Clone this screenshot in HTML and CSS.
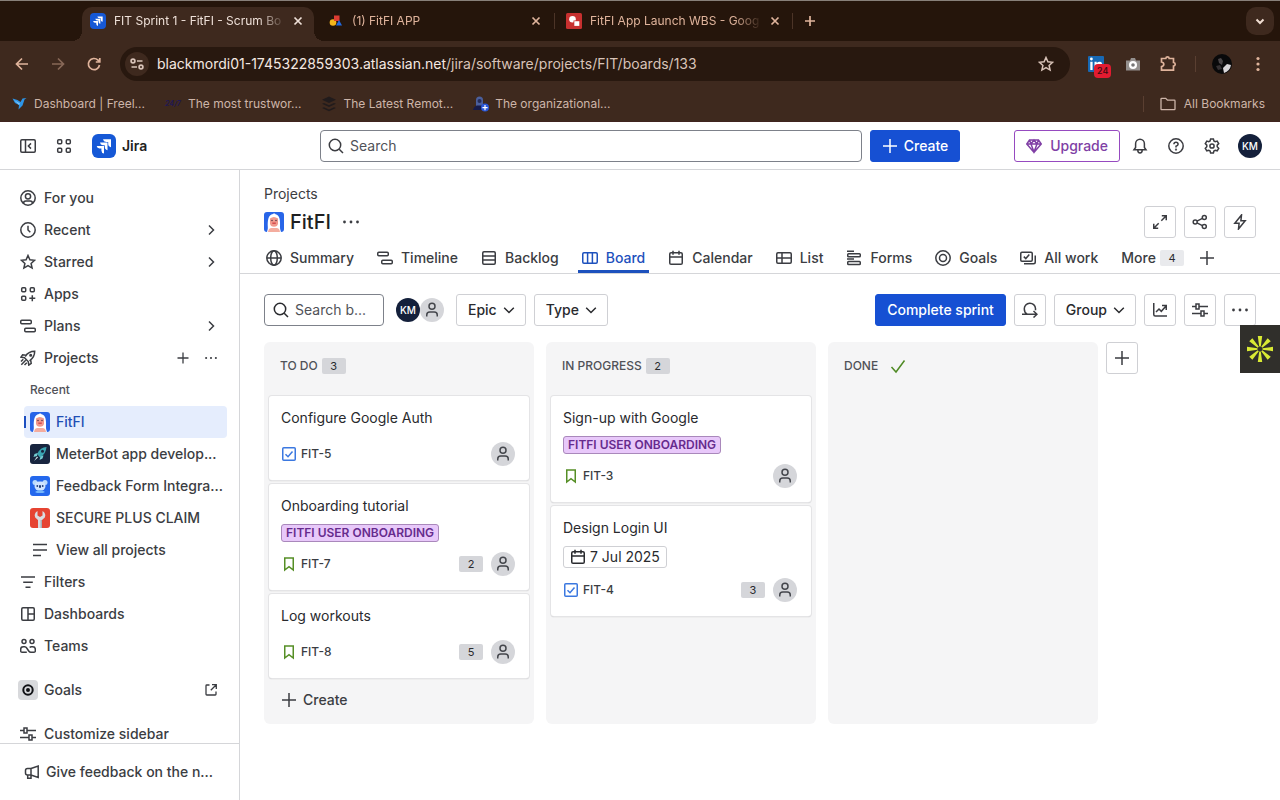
FILE: index.html
```html
<!DOCTYPE html>
<html lang="en">
<head>
<meta charset="utf-8">
<meta name="viewport" content="width=device-width, initial-scale=1">
<title>FIT Sprint 1 - FitFI - Scrum Board</title>
<link rel="stylesheet" href="styles.css">
</head>
<body>
<svg class="defs" aria-hidden="true">
  <symbol id="close" viewBox="0 0 16 16"><path d="M4.500 4.500l7 7M11.500 4.500l-7 7"/></symbol>
  <symbol id="plus" viewBox="0 0 16 16"><path d="M8 1v14M1 8h14"/></symbol>
  <symbol id="more" viewBox="0 0 16 16"><g fill="currentColor" stroke="none"><circle cx="1.500" cy="8" r="1.400"/><circle cx="8" cy="8" r="1.400"/><circle cx="14.500" cy="8" r="1.400"/></g></symbol>
  <symbol id="chev-right" viewBox="0 0 16 16"><path d="M6 3.500L10.500 8 6 12.500"/></symbol>
  <symbol id="chev-down" viewBox="0 0 16 16"><path d="M3.200 5.800L8 10.500l4.800-4.700"/></symbol>
  <symbol id="search" viewBox="0 0 16 16"><circle cx="7" cy="7" r="5.700"/><path d="M11.200 11.200L15 15"/></symbol>
  <symbol id="star" viewBox="0 0 16 16"><path d="M8 1.500l1.900 4.300 4.700.5-3.500 3.100 1 4.700L8 11.700l-4.100 2.400 1-4.700L1.400 6.300l4.700-.5z"/></symbol>
  <symbol id="sliders" viewBox="0 0 16 16"><path d="M0 4.500h4M7 4.500h9M4 2h3v5H4zM0 11.500h9M12 11.500h4M9 9h3v5H9z"/></symbol>
  <symbol id="timeline" viewBox="0 0 16 16"><rect x=".75" y="2.250" width="10.500" height="3.500" rx="1"/><rect x="4.750" y="10.250" width="10.500" height="3.500" rx="1"/></symbol>
  <symbol id="person" viewBox="0 0 16 16"><circle cx="8" cy="4.200" r="3"/><path d="M2.750 14.500v-1.500q0-3 3-3h4.500q3 0 3 3v1.500"/></symbol>
  <symbol id="calendar" viewBox="0 0 16 16"><rect x="1.750" y="2.750" width="12.500" height="11.500" rx="1.300"/><path d="M2 7h12M5 .8v4M11 .8v4"/></symbol>
  <symbol id="task" viewBox="0 0 16 16"><rect x="1.750" y="1.750" width="12.500" height="12.500" rx="1"/><path d="M4.500 8.200l2.500 2.500 4.500-5.200"/></symbol>
  <symbol id="story" viewBox="0 0 16 16"><path d="M3.750 2h8.500v12L8 10.600 3.750 14z"/></symbol>
  <symbol id="target" viewBox="0 0 16 16"><circle cx="8" cy="8" r="7.200"/><circle cx="8" cy="8" r="3.500"/></symbol>
  <symbol id="jira" viewBox="0 0 24 24"><rect width="24" height="24" rx="6" fill="#1558d6" stroke="none"/><g fill="#fff" stroke="none"><path d="M11 5.200h8v8q-2.800-.6-2.800-3.200V8h-2Q11.400 7.800 11 5.200z"/><path d="M8 8.500h7.500v7.700q-2.700-.5-2.700-3.100v-1.900h-2Q8.300 11 8 8.500z"/><path d="M4.700 12h7.300v7.500q-2.600-.5-2.600-3v-1.900H7.500Q5 14.400 4.700 12z"/></g></symbol>
  <symbol id="fitfi" viewBox="0 0 20 20"><rect width="20" height="20" rx="3" fill="#2865e8" stroke="none"/><g stroke="none"><path d="M3 20c.3-2 1-2.500.8-5C3.500 9 4 2.500 9 2c1-1 2.500-.3 2.500.3C16 3 16.300 9 16 15c-.1 2.500.7 3 1 5z" fill="#fff"/><path d="M6 6.500q3.800-3 8 0v5q-.5 3.200-4 3.200T6 11.500z" fill="#f1998c"/><path d="M4 20q.5-4 3.500-4h5q3 0 3.500 4z" fill="#f4ad9f"/><circle cx="8" cy="8.500" r=".8" fill="#5b3948"/><circle cx="12" cy="8.500" r=".8" fill="#5b3948"/><path d="M8.300 10.500h3.500v1.400H8.300z" fill="#d3464a"/></g></symbol>
</svg>

<header class="browser">
  <div class="tabstrip">
    <div class="tab active"><svg class="i"><use href="#jira"/></svg><span class="tab-title">FIT Sprint 1 - FitFI - Scrum Bo</span><button class="bare" aria-label="Close tab"><svg class="i s15"><use href="#close"/></svg></button></div>
    <div class="tab"><svg class="i" viewBox="0 0 16 16"><g stroke="none"><circle cx="5" cy="9.500" r="3.300" fill="#f5b51b"/><path d="M6 2.500h5.500V8H6z" fill="#dd3c32"/><path d="M11 7l3 5.500H8z" fill="#2169e0"/></g></svg><span class="tab-title">(1) FitFI APP</span><button class="bare" aria-label="Close tab"><svg class="i s15"><use href="#close"/></svg></button></div>
    <div class="tab split"><svg class="i" viewBox="0 0 16 16"><g stroke="none"><rect width="16" height="16" rx="1.500" fill="#c7302f"/><circle cx="6.500" cy="6.300" r="3.300" fill="#fff"/><path d="M7.500 7.500h6v5.500h-6z" fill="#c7302f"/><path d="M8.300 8.200h5v4.700h-5z" fill="#fff"/></g></svg><span class="tab-title">FitFI App Launch WBS - Goog</span><button class="bare" aria-label="Close tab"><svg class="i s15"><use href="#close"/></svg></button></div>
    <button class="bare new-tab split" aria-label="New tab"><svg class="i s15" viewBox="0 0 16 16"><path d="M8 3v10M3 8h10"/></svg></button>
    <button class="tab-menu" aria-label="Search tabs"><svg class="i s2" viewBox="0 0 16 16"><path d="M4.500 6.500L8 10l3.500-3.500"/></svg></button>
  </div>
  <div class="toolbar">
    <nav class="nav-buttons" aria-label="History">
      <button class="bare" aria-label="Back"><svg class="i s15" viewBox="0 0 16 16"><path d="M14 8H2.500M8 2.500L2.500 8 8 13.500"/></svg></button>
      <button class="bare dim" aria-label="Forward"><svg class="i s15" viewBox="0 0 16 16"><path d="M2 8h11.500M8 2.500L13.500 8 8 13.500"/></svg></button>
      <button class="bare" aria-label="Reload"><svg class="i s15" viewBox="0 0 16 16"><path d="M13.500 9A5.600 5.600 0 1 1 12 4.200l1.500 1.500M13.800 2v4h-4"/></svg></button>
    </nav>
    <div class="omnibox">
      <button class="site-info" aria-label="Site information"><svg class="i s15" viewBox="0 0 16 16"><circle cx="4" cy="5" r="1.900"/><path d="M8 5h5.500M2.500 11H8"/><circle cx="12" cy="11" r="1.900"/></svg></button>
      <span class="url"><b>blackmordi01-1745322859303.atlassian.net</b>/jira/software/projects/FIT/boards/133</span>
      <button class="bare" aria-label="Bookmark this page"><svg class="i"><use href="#star"/></svg></button>
    </div>
    <div class="extensions">
      <span class="linkedin"><svg class="i" viewBox="0 0 16 16"><g stroke="none"><rect width="16" height="16" rx="1" fill="#1769b5"/><g fill="#fff"><circle cx="3.400" cy="3" r="1.400"/><path d="M2.300 5.800h2.300V14H2.300zM6.500 5.800h2.200V7q2-2 4.500-1l1 2V9h-5.500v5H6.500z"/></g></g></svg><span class="ext-count">24</span></span>
      <svg class="i" viewBox="0 0 16 16"><g stroke="none"><path d="M1 4.500h4L6 2h4l1 2.500h4V14.500H1z" fill="#94908e"/><circle cx="8" cy="9" r="4" fill="#fff"/><circle cx="8" cy="9" r="1.800" fill="#777"/></g></svg>
      <svg class="i big s15" viewBox="0 0 18 18"><path d="M2.500 3.500h4.300q.2-1.700 1.700-1.700t1.700 1.700h4.300v4q1.700.2 1.700 1.800t-1.700 1.800v4h-12v-3.500q2.300-.4 2.300-2.300T2.500 7z"/></svg>
      <span class="divider"></span>
      <svg class="i photo" viewBox="0 0 20 20"><g stroke="none"><circle cx="10" cy="10" r="10" fill="#09090a"/><path d="M11 14l4-4 4 1q-1 6-7 8z" fill="#d8d5d8"/><path d="M6 5l3-1 2 3-1 4-3-2z" fill="#4a4547"/><path d="M4 12l4-1 2 4-4 1z" fill="#353133"/></g></svg>
      <button class="bare" aria-label="Browser menu"><svg class="i" viewBox="0 0 16 16"><g fill="currentColor" stroke="none"><circle cx="8" cy="2.500" r="1.600"/><circle cx="8" cy="8" r="1.600"/><circle cx="8" cy="13.500" r="1.600"/></g></svg></button>
    </div>
  </div>
  <nav class="bookmarks" aria-label="Bookmarks">
    <a href="#"><svg class="i" viewBox="0 0 16 16"><g stroke="none"><path d="M.5 2.500l5 1.500 3 2 2-3.500 4-.5-2 1.500-2 6-4 4 .5-4.500L3 7z" fill="#2d95e8"/><path d="M2 4l6 3.500L7 9z" fill="#7dc6fa"/></g></svg>Dashboard | Freel...</a>
    <a href="#"><span class="fav-text">24/7</span>The most trustwor...</a>
    <a href="#"><svg class="i" viewBox="0 0 16 16"><g fill="#211b1c" stroke="none"><path d="M8 .5l7 3.200-7 3.200-7-3.200z"/><path d="M1 7.800L3 7l5 2.300L13 7l2 .8L8 11z"/><path d="M1 12l2-.8 5 2.300 5-2.300 2 .8-7 3.200z"/></g></svg>The Latest Remot...</a>
    <a href="#"><svg class="i" viewBox="0 0 16 16"><g stroke="none"><path d="M3 4q0-3.500 3.500-3.500T10 4v6H3z" fill="#4b5f9c"/><path d="M0 14q1-4 4-4.500h5l2 4.500z" fill="#171b48"/><circle cx="6.500" cy="5" r="2" fill="#252c58"/><circle cx="12" cy="11.500" r="4" fill="#2856d7"/><path d="M11.400 9h1.200v2h2v1.200h-2v2h-1.200v-2h-2V11h2z" fill="#fff"/></g></svg>The organizational...</a>
    <a class="all-bookmarks" href="#"><svg class="i s13" viewBox="0 0 16 16"><path d="M1 3q0-.7.700-.7h4L7.500 4.200h6.800q.7 0 .7.700v8q0 .7-.7.700H1.700q-.7 0-.7-.7z"/></svg>All Bookmarks</a>
  </nav>
</header>

<header class="topbar">
  <div class="brand">
    <button class="bare" aria-label="Collapse sidebar"><svg class="i" viewBox="0 0 16 16"><rect x=".75" y="1.750" width="14.500" height="12.500" rx="1.200"/><path d="M5.500 2v12M11 5.400L8.400 8l2.600 2.600"/></svg></button>
    <button class="bare" aria-label="Switch apps"><svg class="i" viewBox="0 0 16 16"><rect x="1.700" y="1.700" width="4" height="4" rx="1"/><rect x="10.300" y="1.700" width="4" height="4" rx="1"/><rect x="1.700" y="10.300" width="4" height="4" rx="1"/><rect x="10.300" y="10.300" width="4" height="4" rx="1"/></svg></button>
    <a class="logo" href="#"><svg class="i logo-mark"><use href="#jira"/></svg>Jira</a>
  </div>
  <div class="top-center">
    <label class="field global-search"><svg class="i"><use href="#search"/></svg><input type="search" placeholder="Search" aria-label="Search"></label>
    <button class="btn primary create"><svg class="i"><use href="#plus"/></svg>Create</button>
  </div>
  <div class="top-actions">
    <button class="btn upgrade"><svg class="i" viewBox="0 0 16 16"><path d="M3.500 2h9L15.300 6 8 14.300.7 6zM.7 6h14.600M5 6l3 8 3-8M3.500 2L5 6l3-4 3 4 1.500-4"/></svg>Upgrade</button>
    <button class="bare" aria-label="Notifications"><svg class="i" viewBox="0 0 16 16"><path d="M2 11.800l1.600-2.300V5.700a4.400 4.400 0 0 1 8.800 0v3.800l1.600 2.300zM5.800 12q0 3 2.200 3t2.200-3"/></svg></button>
    <button class="bare" aria-label="Help"><svg class="i" viewBox="0 0 16 16"><circle cx="8" cy="8" r="7.200"/><path d="M5.900 6.300Q6 4.300 8 4.300t2.100 1.900Q10.100 7.300 8 8.300v1.200"/><circle cx="8" cy="11.600" r=".4"/></svg></button>
    <button class="bare" aria-label="Settings"><svg class="i" viewBox="0 0 16 16"><path d="M6.600.9h2.800l.5 2 1.300.8 2-.6 1.500 2.500-1.500 1.500v1.700l1.500 1.500-1.500 2.500-2-.6-1.300.8-.5 2H6.600l-.5-2-1.300-.8-2 .6-1.500-2.500 1.500-1.500V7.100L1.300 5.600l1.500-2.500 2 .6 1.300-.8z"/><circle cx="8" cy="8" r="2.100"/></svg></button>
    <button class="avatar km" aria-label="Account">KM</button>
  </div>
</header>

<div class="shell">
  <aside class="sidebar">
    <nav class="side-list" aria-label="Sidebar">
      <a class="side-item" href="#"><svg class="i" viewBox="0 0 16 16"><circle cx="8" cy="8" r="7.200"/><circle cx="8" cy="6.300" r="2.600"/><path d="M3.500 13.500q0-2.500 2.300-2.500h4.400q2.300 0 2.300 2.500"/></svg>For you</a>
      <a class="side-item" href="#"><svg class="i" viewBox="0 0 16 16"><circle cx="8" cy="8" r="7.200"/><path d="M8 3.800V8l2.300 2.300"/></svg>Recent<svg class="i end"><use href="#chev-right"/></svg></a>
      <a class="side-item" href="#"><svg class="i"><use href="#star"/></svg>Starred<svg class="i end"><use href="#chev-right"/></svg></a>
      <a class="side-item" href="#"><svg class="i" viewBox="0 0 16 16"><rect x="1.700" y="1.700" width="4" height="4" rx="1"/><rect x="10.300" y="1.700" width="4" height="4" rx="1"/><rect x="1.700" y="10.300" width="4" height="4" rx="1"/><path d="M12.300 9.300v6M9.300 12.300h6"/></svg>Apps</a>
      <a class="side-item" href="#"><svg class="i"><use href="#timeline"/></svg>Plans<svg class="i end"><use href="#chev-right"/></svg></a>
      <div class="side-item"><svg class="i" viewBox="0 0 16 16"><path d="M5.200 6.500Q8.500 1.300 14.700 1.300 14.700 7.500 9.500 10.800M6 5.300L2.600 4.800.9 7.200l3.600.6 3.700 3.700.6 3.600 2.400-1.700-.5-3.400M1 11.500L3.300 9.200M1.300 14.700L5.700 10.300M4.500 15l2.300-2.300"/><circle cx="10.700" cy="5.300" r=".8"/></svg><span>Projects</span><span class="end pair"><button class="bare" aria-label="Add project"><svg class="i s13" viewBox="0 0 16 16"><path d="M8 2.500v11M2.500 8h11"/></svg></button><button class="bare" aria-label="Project options"><svg class="i small-dots"><use href="#more"/></svg></button></span></div>
      <div class="side-sub">
        <p class="side-label">Recent</p>
        <a class="side-item selected" href="#"><svg class="i pic"><use href="#fitfi"/></svg>FitFI</a>
        <a class="side-item" href="#"><svg class="i pic" viewBox="0 0 20 20"><g stroke="none"><rect width="20" height="20" rx="3" fill="#18253f"/><path d="M16.500 3q-6 0-9.500 7l3 3.500Q16 10 16.500 3z" fill="#3aa5b2"/><path d="M7.500 9L4.500 10l-1 3 3.500-1zM10.500 12.500l-1 3.500 3-1.500 1-3z" fill="#74cdd3"/><circle cx="12.500" cy="7.300" r="1.500" fill="#18253f"/><path d="M7 12.500l1 1L4 17z" fill="#d7eff1"/></g></svg>MeterBot app develop...</a>
        <a class="side-item" href="#"><svg class="i pic" viewBox="0 0 20 20"><g stroke="none"><rect width="20" height="20" rx="3" fill="#2468ed"/><circle cx="5" cy="6.500" r="2.500" fill="#b9dbfd"/><circle cx="15" cy="6.500" r="2.500" fill="#b9dbfd"/><rect x="4.500" y="5.500" width="11" height="9" rx="4.500" fill="#cfe4ff"/><path d="M5 16q5-4 10 0l-2 1H7z" fill="#75b6fb"/><circle cx="7.300" cy="10" r=".9" fill="#203d77"/><circle cx="12.700" cy="10" r=".9" fill="#203d77"/><rect x="9" y="9" width="2" height="3" rx="1" fill="#203d77"/></g></svg>Feedback Form Integra...</a>
        <a class="side-item" href="#"><svg class="i pic" viewBox="0 0 20 20"><g stroke="none"><rect width="20" height="20" rx="3" fill="#e64432"/><path d="M7.500 3v4.500L10 9l2.500-1.500V3q4 2.500 2.300 6.500L12 12v8H8v-8L5.200 9.500Q3.500 5.500 7.500 3z" fill="#d9dce0"/><path d="M10.500 12H12v8h-1.500z" fill="#a8adb4"/></g></svg>SECURE PLUS CLAIM</a>
        <a class="side-item" href="#"><svg class="i pic" viewBox="0 0 20 20"><path d="M3 4.500h14M3 10h14M3 15.500h8"/></svg>View all projects</a>
      </div>
      <a class="side-item" href="#"><svg class="i" viewBox="0 0 16 16"><path d="M1 3h14M3.200 8.200h9.600M5.500 13.300h5"/></svg>Filters</a>
      <a class="side-item" href="#"><svg class="i" viewBox="0 0 16 16"><rect x="1.750" y="1.750" width="12.500" height="12.500" rx="1.200"/><path d="M8 2v12M8 8h6"/></svg>Dashboards</a>
      <a class="side-item" href="#"><svg class="i" viewBox="0 0 16 16"><circle cx="4" cy="3.600" r="2"/><circle cx="12" cy="3.600" r="2"/><path d="M6.800 14.300H2q-1.300 0-1.300-1.300V11.300q0-2.500 2.500-2.500h1.500q1.300 0 2 1.200l2 3Q9.600 14.300 11 14.300h3q1.300 0 1.300-1.300v-1.700q0-2.500-2.500-2.500h-1.500q-1 0-1.600.7"/></svg>Teams</a>
      <a class="side-item apart" href="#"><span class="goal-tile"><svg class="i s2" viewBox="0 0 16 16"><circle cx="8" cy="8" r="4.700"/><circle cx="8" cy="8" r="1" fill="currentColor"/></svg></span>Goals<svg class="i end s13" viewBox="0 0 16 16"><path d="M6.500 3H3.800Q3 3 3 3.800v8.400q0 .8.800.8h8.400q.8 0 .8-.8V9.500M9 2.700h4.300V7M13 3L7.800 8.200"/></svg></a>
      <a class="side-item apart" href="#"><svg class="i"><use href="#sliders"/></svg>Customize sidebar</a>
    </nav>
    <a class="feedback" href="#"><svg class="i" viewBox="0 0 16 16"><path d="M7 4.500L14.200 2v11.500L7 11H3.500q-2 0-2-2V6.500q0-2 2-2zM7 4.500V11M3.700 11v3.200H7V11"/></svg>Give feedback on the n...</a>
  </aside>

  <main class="main">
    <div class="page-head">
      <div>
        <a class="crumb" href="#">Projects</a>
        <div class="title-row"><svg class="i pic"><use href="#fitfi"/></svg><h1>FitFI</h1><button class="bare" aria-label="Project actions"><svg class="i"><use href="#more"/></svg></button></div>
      </div>
      <div class="head-actions">
        <button class="btn icon" aria-label="Full screen"><svg class="i" viewBox="0 0 16 16"><path d="M9.800 1.750h4.450V6.200M14 2L9.300 6.700M6.200 14.250H1.750V9.800M2 14l4.700-4.700"/></svg></button>
        <button class="btn icon" aria-label="Share"><svg class="i" viewBox="0 0 16 16"><circle cx="3.200" cy="8" r="2"/><circle cx="12.300" cy="3.500" r="2"/><circle cx="12.300" cy="12.500" r="2"/><path d="M5 7.100l5.400-2.700M5 8.900l5.400 2.700"/></svg></button>
        <button class="btn icon" aria-label="Automation"><svg class="i" viewBox="0 0 16 16"><path d="M9.500 1L2.800 9.300h4.300L6.500 15l6.700-8.300H8.900z"/></svg></button>
      </div>
    </div>
    <nav class="views" aria-label="Project views">
      <a href="#"><svg class="i" viewBox="0 0 16 16"><circle cx="8" cy="8" r="7.200"/><ellipse cx="8" cy="8" rx="3.300" ry="7.200"/><path d="M1 8h14"/></svg>Summary</a>
      <a href="#"><svg class="i"><use href="#timeline"/></svg>Timeline</a>
      <a href="#"><svg class="i" viewBox="0 0 16 16"><rect x="1.750" y="1.750" width="12.500" height="12.500" rx="1.200"/><path d="M2 6h12M2 10h12"/></svg>Backlog</a>
      <a class="current" href="#"><svg class="i" viewBox="0 0 16 16"><rect x=".75" y="2.750" width="14.500" height="10.500" rx="1.200"/><path d="M5.600 3v10M10.400 3v10"/></svg>Board</a>
      <a href="#"><svg class="i"><use href="#calendar"/></svg>Calendar</a>
      <a href="#"><svg class="i" viewBox="0 0 16 16"><rect x=".75" y="2.750" width="14.500" height="10.500" rx="1.200"/><path d="M1 8h14M6 3v10"/></svg>List</a>
      <a href="#"><svg class="i" viewBox="0 0 16 16"><path d="M1 1.300h7M1 9h7"/><rect x="1.750" y="3.800" width="12.500" height="3" rx=".8"/><rect x="1.750" y="11.500" width="12.500" height="3" rx=".8"/></svg>Forms</a>
      <a href="#"><svg class="i"><use href="#target"/></svg>Goals</a>
      <a href="#"><svg class="i" viewBox="0 0 16 16"><rect x=".75" y="2.250" width="11.500" height="9" rx="1.200"/><path d="M3.800 6.600l2 2 3.500-4M4 13.750h9.500q1.750 0 1.750-1.750V5.500"/></svg>All work</a>
      <button class="bare views-more">More<span class="count light">4</span></button>
      <button class="bare" aria-label="Add view"><svg class="i"><use href="#plus"/></svg></button>
    </nav>

    <section class="content">
      <div class="filters">
        <label class="field board-search"><svg class="i"><use href="#search"/></svg><input type="search" placeholder="Search b..." aria-label="Search board"></label>
        <div class="people"><button class="avatar km" aria-label="KM">KM</button><button class="avatar" aria-label="Unassigned"><svg class="i"><use href="#person"/></svg></button></div>
        <button class="btn menu">Epic<svg class="i"><use href="#chev-down"/></svg></button>
        <button class="btn menu">Type<svg class="i"><use href="#chev-down"/></svg></button>
        <div class="board-actions">
          <button class="btn primary">Complete sprint</button>
          <button class="btn icon" aria-label="Sprint details"><svg class="i" viewBox="0 0 16 16"><path d="M0 12.250h15M11.500 9l3.500 3.250-3.500 3.250M5 12Q2.300 10.500 2.300 7A5.600 5.600 0 0 1 13.500 6.500V8.300"/></svg></button>
          <button class="btn menu">Group<svg class="i"><use href="#chev-down"/></svg></button>
          <button class="btn icon" aria-label="Insights"><svg class="i" viewBox="0 0 16 16"><path d="M1.750 1v11.500q0 1.500 1.500 1.500H15M4 10l3-3 2.300 2.300L14 4M10 3.500h4.250V8"/></svg></button>
          <button class="btn icon" aria-label="View settings"><svg class="i"><use href="#sliders"/></svg></button>
          <button class="btn icon" aria-label="More actions"><svg class="i"><use href="#more"/></svg></button>
        </div>
      </div>

      <div class="board">
        <section class="column">
          <h2>TO DO<span class="count">3</span></h2>
          <article class="card"><h3>Configure Google Auth</h3><div class="meta"><svg class="i task"><use href="#task"/></svg><a href="#">FIT-5</a><span class="avatar end"><svg class="i"><use href="#person"/></svg></span></div></article>
          <article class="card"><h3>Onboarding tutorial</h3><span class="epic">FITFI USER ONBOARDING</span><div class="meta"><svg class="i story"><use href="#story"/></svg><a href="#">FIT-7</a><span class="count end">2</span><span class="avatar"><svg class="i"><use href="#person"/></svg></span></div></article>
          <article class="card"><h3>Log workouts</h3><div class="meta"><svg class="i story"><use href="#story"/></svg><a href="#">FIT-8</a><span class="count end">5</span><span class="avatar"><svg class="i"><use href="#person"/></svg></span></div></article>
          <button class="bare add-card"><svg class="i"><use href="#plus"/></svg>Create</button>
        </section>
        <section class="column">
          <h2>IN PROGRESS<span class="count">2</span></h2>
          <article class="card"><h3>Sign-up with Google</h3><span class="epic">FITFI USER ONBOARDING</span><div class="meta"><svg class="i story"><use href="#story"/></svg><a href="#">FIT-3</a><span class="avatar end"><svg class="i"><use href="#person"/></svg></span></div></article>
          <article class="card"><h3>Design Login UI</h3><span class="due"><svg class="i"><use href="#calendar"/></svg>7 Jul 2025</span><div class="meta"><svg class="i task"><use href="#task"/></svg><a href="#">FIT-4</a><span class="count end">3</span><span class="avatar"><svg class="i"><use href="#person"/></svg></span></div></article>
        </section>
        <section class="column">
          <h2>DONE<svg class="i done" viewBox="0 0 16 16"><path d="M1.500 9l4.500 5L14.500 2.500"/></svg></h2>
        </section>
        <button class="btn icon" aria-label="Add column"><svg class="i"><use href="#plus"/></svg></button>
      </div>
    </section>
  </main>
</div>

<button class="widget" aria-label="Assistant"><svg viewBox="0 0 28 28"><g fill="#d9ea34"><path id="ray" d="M11.800 1h4.400l-1.400 10.500h-1.600z"/><use href="#ray" transform="rotate(45 14 14)"/><use href="#ray" transform="rotate(90 14 14)"/><use href="#ray" transform="rotate(135 14 14)"/><use href="#ray" transform="rotate(180 14 14)"/><use href="#ray" transform="rotate(225 14 14)"/><use href="#ray" transform="rotate(270 14 14)"/><use href="#ray" transform="rotate(315 14 14)"/></g></svg></button>
</body>
</html>
```
FILE: styles.css
```css
* { box-sizing: border-box; }
body {
  margin: 0;
  height: 100vh;
  display: flex;
  flex-direction: column;
  overflow: hidden;
  background: #fff;
  color: #292a2e;
  font: 400 14px/20px Inter, "Liberation Sans", sans-serif;
}
h1, h2, h3, p { margin: 0; }
a { color: inherit; text-decoration: none; }
button, input { font: inherit; color: inherit; }
button { cursor: pointer; white-space: nowrap; }
.defs { position: absolute; width: 0; height: 0; }
.i {
  width: 16px;
  height: 16px;
  flex: none;
  fill: none;
  stroke: currentColor;
  stroke-width: 1.5;
}
.i.s15 { stroke-width: 1.7; }
.i.s2 { stroke-width: 2; }
.i.s13 { stroke-width: 1.3; }
.i.big { width: 18px; height: 18px; }
.i.pic { width: 20px; height: 20px; }
.bare {
  display: flex;
  align-items: center;
  padding: 0;
  border: 0;
  background: none;
}
.end { margin-left: auto; }

/* Browser window */
.browser { flex: none; background: #3e291e; color: #e0b49c; font-size: 12px; border-bottom: 1px solid #40241f; }
.tabstrip {
  display: flex;
  align-items: center;
  gap: 6px;
  height: 41px;
  padding: 6px 6px 0 82px;
  border-top: 1px solid #88807a;
  background: #25150b;
}
.tab {
  position: relative;
  display: flex;
  align-items: center;
  gap: 8px;
  width: 232px;
  height: 34px;
  padding: 0 8px 6px;
}
.tab.active { background: #3e291e; color: #eee0d8; border-radius: 10px 10px 0 0; }
.tab.active::before, .tab.active::after {
  content: "";
  position: absolute;
  bottom: 0;
  width: 10px;
  height: 10px;
}
.tab.active::before { left: -10px; background: radial-gradient(circle at 0 0, transparent 10px, #3e291e 10px); }
.tab.active::after { right: -10px; background: radial-gradient(circle at 100% 0, transparent 10px, #3e291e 10px); }
.tab-title {
  flex: 1;
  white-space: nowrap;
  -webkit-mask-image: linear-gradient(90deg, #000 144px, transparent 172px);
  mask-image: linear-gradient(90deg, #000 144px, transparent 172px);
}
.split::before {
  content: "";
  position: absolute;
  left: -4px;
  top: 6px;
  width: 1px;
  height: 16px;
  background: #4c3427;
}
.new-tab { position: relative; height: 34px; padding: 0 6px 6px; }
.tab-menu {
  display: grid;
  place-items: center;
  width: 28px;
  height: 28px;
  margin: 0 0 6px auto;
  padding: 0;
  border: 0;
  border-radius: 10px;
  background: #3e291e;
  color: #f0ddd2;
}
.toolbar { display: flex; align-items: center; height: 46px; padding: 0 14px; }
.nav-buttons { display: flex; gap: 20px; margin-right: 18px; }
.dim { opacity: 0.45; }
.omnibox {
  flex: 1;
  display: flex;
  align-items: center;
  gap: 8px;
  height: 34px;
  padding: 0 16px 0 5px;
  border-radius: 17px;
  background: #28180f;
  color: #d8c3b8;
  font-size: 14px;
}
.site-info {
  display: grid;
  place-items: center;
  width: 24px;
  height: 24px;
  padding: 0;
  border: 0;
  border-radius: 50%;
  background: #3e291e;
}
.url { flex: 1; white-space: nowrap; }
.url b { color: #f5e8e1; font-weight: 400; }
.extensions { display: flex; align-items: center; gap: 18px; margin-left: 18px; }
.linkedin { position: relative; display: flex; margin-right: 3px; }
.ext-count {
  position: absolute;
  left: 6px;
  top: 8px;
  padding: 0 3px;
  border-radius: 4px;
  background: #e11b30;
  color: #3a0a10;
  font: 500 9px/14px Inter, sans-serif;
}
.divider { width: 1px; height: 16px; margin-right: -2px; background: #5a3f31; }
.i.photo { width: 20px; height: 20px; }
.bookmarks { display: flex; align-items: center; gap: 20px; height: 34px; padding: 0 15px 0 12px; color: #cdb5a9; }
.bookmarks a { display: flex; align-items: center; gap: 6px; white-space: nowrap; }
.fav-text { width: 17px; color: #211852; font: italic 700 7px/16px Inter, sans-serif; }
.bookmarks .all-bookmarks { margin-left: auto; gap: 8px; padding-left: 16px; border-left: 1px solid #5a3f31; line-height: 16px; }

/* Shared controls */
.btn {
  display: flex;
  align-items: center;
  justify-content: center;
  gap: 6px;
  height: 32px;
  padding: 0 11px;
  border: 1px solid #cfd0d4;
  border-radius: 3px;
  background: #fff;
  font-weight: 500;
}
.btn.menu { gap: 4px; padding-right: 8px; }
.btn.icon { width: 32px; padding: 0; color: #3b3c41; }
.btn.primary { border-color: #1650d3; background: #1650d3; color: #fff; }
.field {
  display: flex;
  align-items: center;
  gap: 6px;
  height: 32px;
  padding: 0 8px;
  border: 1px solid #7d818a;
  border-radius: 4px;
}
.field input {
  flex: 1;
  min-width: 0;
  padding: 0;
  border: 0;
  outline: 0;
  background: none;
}
.field input::placeholder { color: #505258; opacity: 1; }
.field input::-webkit-search-cancel-button { display: none; }
.avatar {
  display: grid;
  place-items: center;
  width: 24px;
  height: 24px;
  padding: 0;
  border: 0;
  border-radius: 50%;
  background: #d5d6da;
  color: #44464c;
}
.avatar.km { background: #14203b; color: #fff; font: 500 10px/24px Inter, sans-serif; }
.count {
  display: inline-block;
  width: 24px;
  border-radius: 2px;
  background: #d5d6da;
  color: #292a2e;
  font: 400 11px/16px Inter, sans-serif;
  text-align: center;
}
.count.light { background: #e9eaed; }

/* Jira top bar */
.topbar {
  flex: none;
  display: grid;
  grid-template-columns: 1fr 640px 1fr;
  align-items: center;
  height: 48px;
  padding: 0 18px;
  border-bottom: 1px solid #d5d6d9;
  color: #3b3c41;
}
.brand { display: flex; align-items: center; gap: 20px; padding-left: 2px; }
.logo { display: flex; align-items: center; gap: 6px; color: #1e1f21; font-weight: 600; }
.i.logo-mark { width: 24px; height: 24px; }
.top-center { display: flex; gap: 8px; }
.global-search { flex: 1; }
.field.global-search { padding: 0 7px; }
.create { width: 90px; }
.top-actions { display: flex; align-items: center; justify-content: flex-end; gap: 20px; }
.top-actions .bare + .avatar { margin-left: -2px; }
.upgrade { gap: 8px; margin-right: -8px; border-color: #964ac0; color: #803fa5; }

/* Sidebar */
.shell { flex: 1; min-height: 0; display: flex; }
.sidebar {
  flex: none;
  width: 240px;
  display: flex;
  flex-direction: column;
  border-right: 1px solid #d5d6d9;
  color: #3b3d42;
  font-weight: 500;
}
.side-list { flex: 1; min-height: 0; overflow: hidden; padding: 12px 12px 0; }
.side-item {
  display: flex;
  align-items: center;
  gap: 8px;
  height: 32px;
  padding: 0 8px;
  border-radius: 4px;
  white-space: nowrap;
}
.pair { display: flex; gap: 14px; }
.i.small-dots { width: 12px; margin-right: 2px; }
.side-sub { padding-left: 12px; }
.side-sub .side-item { gap: 6px; padding: 0 6px; }
.side-label { padding: 0 6px; color: #505258; font-size: 12px; line-height: 32px; }
.side-item.selected {
  background: linear-gradient(#1c4fc0, #1c4fc0) 0 50% / 2px 12px no-repeat #e5edfd;
  color: #1f4fb5;
}
.side-item.apart { margin-top: 12px; }
.goal-tile {
  display: grid;
  place-items: center;
  width: 20px;
  height: 20px;
  margin: 0 -2px;
  border-radius: 4px;
  background: #d8d9dc;
  color: #111216;
}
.feedback {
  flex: none;
  display: flex;
  align-items: center;
  gap: 6px;
  height: 57px;
  padding: 0 24px;
  border-top: 1px solid #d5d6d9;
  white-space: nowrap;
}

/* Project page */
.main { flex: 1; min-width: 0; padding-top: 14px; color: #3b3d42; }
.page-head { display: flex; justify-content: space-between; align-items: flex-end; padding: 0 24px; }
.title-row { display: flex; align-items: center; gap: 6px; height: 32px; margin-top: 2px; }
.title-row h1 { margin-right: 6px; color: #1e1f21; font-size: 20px; line-height: 24px; font-weight: 500; }
.head-actions { display: flex; gap: 8px; }
.views {
  display: flex;
  gap: 15px;
  height: 36px;
  padding: 0 22px;
  border-bottom: 1px solid #d5d6d9;
  font-weight: 500;
  white-space: nowrap;
}
.views a { display: flex; align-items: center; gap: 8px; padding: 5px 4px 0; }
.views .bare { padding-top: 5px; }
.views a.current { color: #1d51bd; box-shadow: inset 0 -3px #1d51bd; }
.views .views-more { gap: 4px; margin-left: 4px; }
.content { padding: 20px 24px 0; }
.filters { display: flex; align-items: center; gap: 8px; color: #292a2e; }
.board-search { width: 120px; }
.people { display: flex; padding: 0 4px; }
.board-actions { display: flex; gap: 8px; margin-left: auto; }

/* Board */
.board { display: flex; gap: 12px; margin-top: 16px; }
.column {
  flex: 0 0 270px;
  display: flex;
  flex-direction: column;
  gap: 4px;
  padding: 0 5px;
  border-radius: 6px;
  background: #f5f5f6;
}
.column + .btn { margin-left: -4px; }
.column h2 {
  display: flex;
  align-items: center;
  gap: 4px;
  height: 50px;
  padding: 0 11px 2px;
  color: #505258;
  font-size: 12px;
  line-height: 16px;
  font-weight: 500;
}
.i.done { margin-left: 8px; color: #4f8a24; }
.card {
  display: flex;
  flex-direction: column;
  align-items: flex-start;
  padding: 12px 14px 14px 12px;
  border-radius: 3px;
  background: #fff;
  box-shadow: 0 0 0 1px #e4e4e6, 0 1px 1px #a9aaae;
}
.card h3 { color: #292a2e; font-size: 14px; line-height: 20px; font-weight: 400; }
.meta {
  align-self: stretch;
  display: flex;
  align-items: center;
  gap: 8px;
  margin-top: 10px;
  font-size: 12px;
}
.meta a { margin-left: -4px; font-weight: 500; }
h3 + .meta { margin-top: 14px; }
.task { color: #3b78e0; }
.story { color: #568f26; }
.epic {
  margin-top: 8px;
  padding: 0 4px;
  border: 1px solid #a988bb;
  border-radius: 3px;
  background: #e8c8fa;
  color: #662b8d;
  font-size: 12px;
  line-height: 16px;
  font-weight: 600;
}
.due {
  display: flex;
  align-items: center;
  gap: 4px;
  margin-top: 8px;
  padding: 0 6px;
  border: 1px solid #cfd0d4;
  border-radius: 3px;
  color: #292a2e;
}
.add-card { gap: 6px; height: 42px; padding: 0 12px 6px; font-weight: 500; }

.widget {
  position: absolute;
  right: 0;
  top: 325px;
  display: grid;
  place-items: center;
  width: 40px;
  height: 48px;
  padding: 0;
  border: 0;
  background: #302f2b;
}
.widget svg { width: 28px; height: 28px; }
```
